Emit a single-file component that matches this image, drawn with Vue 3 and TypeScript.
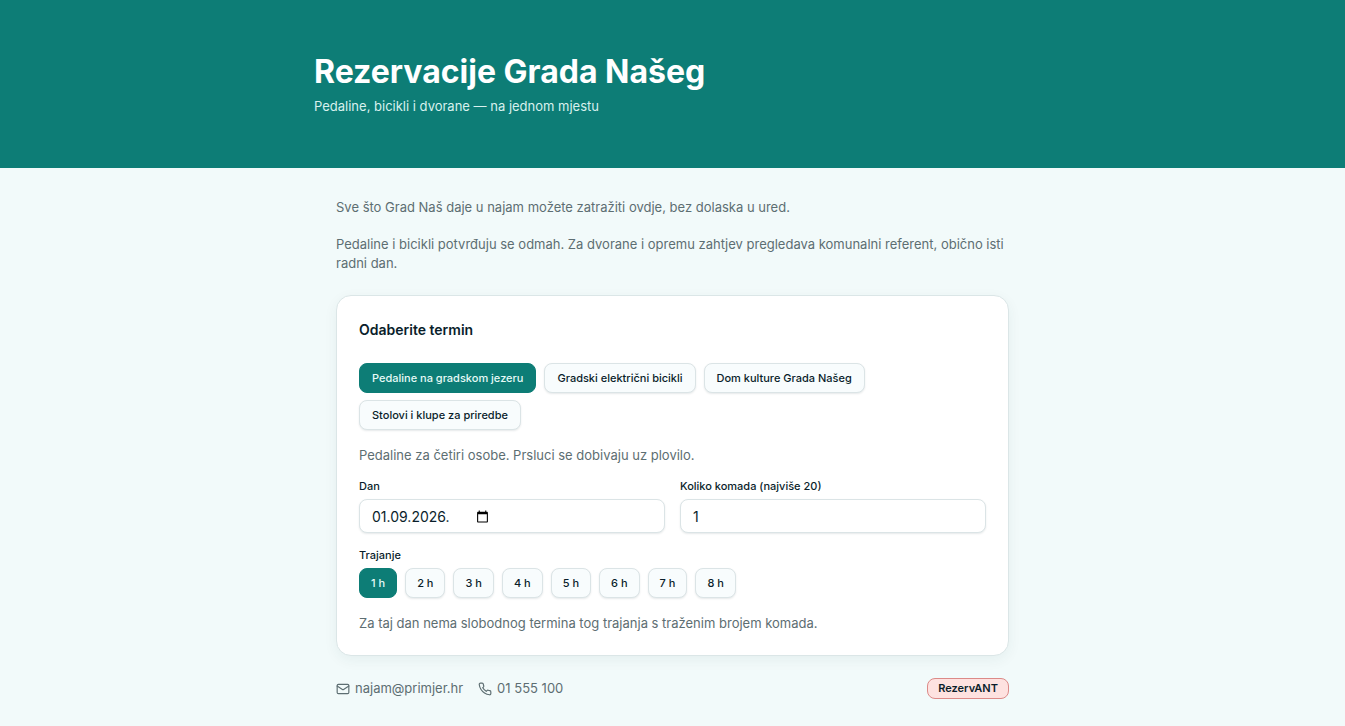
<script setup lang="ts">
import { ref } from 'vue'

const offers: string[] = [
  'Pedaline na gradskom jezeru',
  'Gradski električni bicikli',
  'Dom kulture Grada Našeg',
  'Stolovi i klupe za priredbe',
]
const durations: number[] = [1, 2, 3, 4, 5, 6, 7, 8]

const offer = ref<string>(offers[0])
const duration = ref<number>(1)
const day = ref<string>('01.09.2026.')
const quantity = ref<number>(1)
</script>

<template>
  <div class="page">
    <header class="hero">
      <div class="hero-inner">
        <h1>Rezervacije Grada Našeg</h1>
        <p>Pedaline, bicikli i dvorane — na jednom mjestu</p>
      </div>
    </header>

    <main class="content">
      <div class="intro">
        <p>Sve što Grad Naš daje u najam možete zatražiti ovdje, bez dolaska u ured.</p>
        <p>Pedaline i bicikli potvrđuju se odmah. Za dvorane i opremu zahtjev pregledava komunalni referent, obično isti radni dan.</p>
      </div>

      <section class="card">
        <h2>Odaberite termin</h2>

        <div class="chips offers">
          <button
            v-for="item in offers"
            :key="item"
            type="button"
            class="chip"
            :class="{ active: item === offer }"
            :aria-pressed="item === offer"
            @click="offer = item"
          >{{ item }}</button>
        </div>

        <p class="note">Pedaline za četiri osobe. Prsluci se dobivaju uz plovilo.</p>

        <div class="fields">
          <div class="field">
            <label for="day">Dan</label>
            <div class="control">
              <input id="day" v-model="day" class="date" type="text" />
              <button type="button" class="picker" aria-label="Kalendar">
                <svg viewBox="0 0 24 24" width="13" height="13" aria-hidden="true">
                  <path fill="currentColor" d="M20 3h-1V1h-2v2H7V1H5v2H4c-1.1 0-2 .9-2 2v16c0 1.1.9 2 2 2h16c1.1 0 2-.9 2-2V5c0-1.1-.9-2-2-2zm0 18H4V8h16v13z" />
                </svg>
              </button>
            </div>
          </div>
          <div class="field">
            <label for="quantity">Koliko komada (najviše 20)</label>
            <div class="control">
              <input id="quantity" v-model="quantity" type="number" min="1" max="20" />
            </div>
          </div>
        </div>

        <fieldset class="duration">
          <legend>Trajanje</legend>
          <div class="chips">
            <button
              v-for="hours in durations"
              :key="hours"
              type="button"
              class="chip"
              :class="{ active: hours === duration }"
              :aria-pressed="hours === duration"
              @click="duration = hours"
            >{{ hours }} h</button>
          </div>
        </fieldset>

        <p class="note">Za taj dan nema slobodnog termina tog trajanja s traženim brojem komada.</p>
      </section>

      <footer class="footer">
        <a class="contact" href="mailto:najam@primjer.hr">
          <svg viewBox="0 0 24 24" width="14" height="14" aria-hidden="true">
            <rect x="2" y="4" width="20" height="16" rx="2" />
            <path d="m22 7-8.97 5.7a1.94 1.94 0 0 1-2.06 0L2 7" />
          </svg>
          najam@primjer.hr
        </a>
        <a class="contact" href="tel:01555100">
          <svg viewBox="0 0 24 24" width="14" height="14" aria-hidden="true">
            <path d="M22 16.92v3a2 2 0 0 1-2.18 2 19.79 19.79 0 0 1-8.63-3.07 19.5 19.5 0 0 1-6-6 19.79 19.79 0 0 1-3.07-8.67A2 2 0 0 1 4.11 2h3a2 2 0 0 1 2 1.72 12.84 12.84 0 0 0 .7 2.81 2 2 0 0 1-.45 2.11L8.09 9.91a16 16 0 0 0 6 6l1.27-1.27a2 2 0 0 1 2.11-.45 12.84 12.84 0 0 0 2.81.7A2 2 0 0 1 22 16.92z" />
          </svg>
          01 555 100
        </a>
        <a class="brand" href="#">RezervANT</a>
      </footer>
    </main>
  </div>
</template>

<style>
body {
  margin: 0;
  background: #f2fafa;
}
</style>

<style scoped>
.page {
  min-height: 100vh;
  font-family: Inter, "Liberation Sans", sans-serif;
  font-size: 13px;
  line-height: 19px;
  color: #0a1e2b;
}

h1,
h2,
p {
  margin: 0;
}

.hero {
  background: #0d7d76;
  color: #fff;
  padding: 52px 22px;
}

.hero-inner {
  max-width: 717px;
  margin: 0 auto;
}

h1 {
  font-size: 32px;
  line-height: 40px;
  font-weight: 700;
}

.hero p {
  margin-top: 5px;
  color: #d8f1ee;
}

.content {
  box-sizing: border-box;
  max-width: 717px;
  margin: 0 auto;
  padding: 30px 22px 26px;
}

.intro {
  display: grid;
  gap: 18px;
  color: #5d6e72;
}

.card {
  margin-top: 22px;
  padding: 22px;
  background: #fff;
  border: 1px solid #dbe6e7;
  border-radius: 15px;
  box-shadow: 0 4px 14px rgba(13, 60, 70, 0.06);
}

h2 {
  font-size: 14px;
  line-height: 24px;
  font-weight: 600;
}

.chips {
  display: flex;
  flex-wrap: wrap;
  gap: 7px 8px;
}

.offers {
  margin-top: 21px;
}

.chip {
  height: 30px;
  padding: 0 11px;
  font: 500 11px/16px Inter, "Liberation Sans", sans-serif;
  color: #0a1e2b;
  background: #f8fcfd;
  border: 1px solid #dbe4e6;
  border-radius: 8px;
  box-shadow: 0 1px 2px rgba(13, 40, 50, 0.1);
  cursor: pointer;
}

.offers .chip {
  padding: 0 12px;
}

.chip.active {
  color: #e6faf7;
  background: #0d7d76;
  border-color: #0d7d76;
  box-shadow: none;
}

.note {
  margin-top: 16px;
  color: #5d6e72;
}

.fields {
  display: grid;
  grid-template-columns: 1fr 1fr;
  gap: 15px;
  margin-top: 13px;
}

label,
legend {
  display: block;
  padding: 0;
  font-size: 11px;
  line-height: 16px;
  font-weight: 500;
}

.control {
  display: flex;
  align-items: center;
  box-sizing: border-box;
  height: 34px;
  margin-top: 5px;
  padding: 0 12px;
  background: #fff;
  border: 1px solid #dbe4e6;
  border-radius: 8px;
  box-shadow: 0 1px 2px rgba(13, 40, 50, 0.1);
}

input {
  flex: 1;
  min-width: 0;
  padding: 0;
  font: 400 14px/19px Inter, "Liberation Sans", sans-serif;
  color: #0a1e2b;
  background: none;
  border: 0;
}

.date {
  flex: 0 0 104px;
}

.picker {
  display: flex;
  padding: 0;
  color: #000;
  background: none;
  border: 0;
}

.duration {
  min-width: 0;
  margin: 14px 0 0;
  padding: 0;
  border: 0;
}

.duration .chips {
  margin-top: 5px;
}

.footer {
  display: flex;
  align-items: center;
  gap: 15px;
  margin-top: 22px;
}

.contact {
  display: flex;
  align-items: center;
  gap: 5px;
  color: #5d6e72;
  text-decoration: none;
}

.contact svg {
  fill: none;
  stroke: currentColor;
  stroke-width: 2;
  stroke-linecap: round;
  stroke-linejoin: round;
}

.brand {
  margin-left: auto;
  padding: 1px 10px;
  font-size: 11px;
  line-height: 17px;
  font-weight: 600;
  color: #0a1e2b;
  background: #fee2e0;
  border: 1px solid #dc8a88;
  border-radius: 8px;
  text-decoration: none;
}
</style>
